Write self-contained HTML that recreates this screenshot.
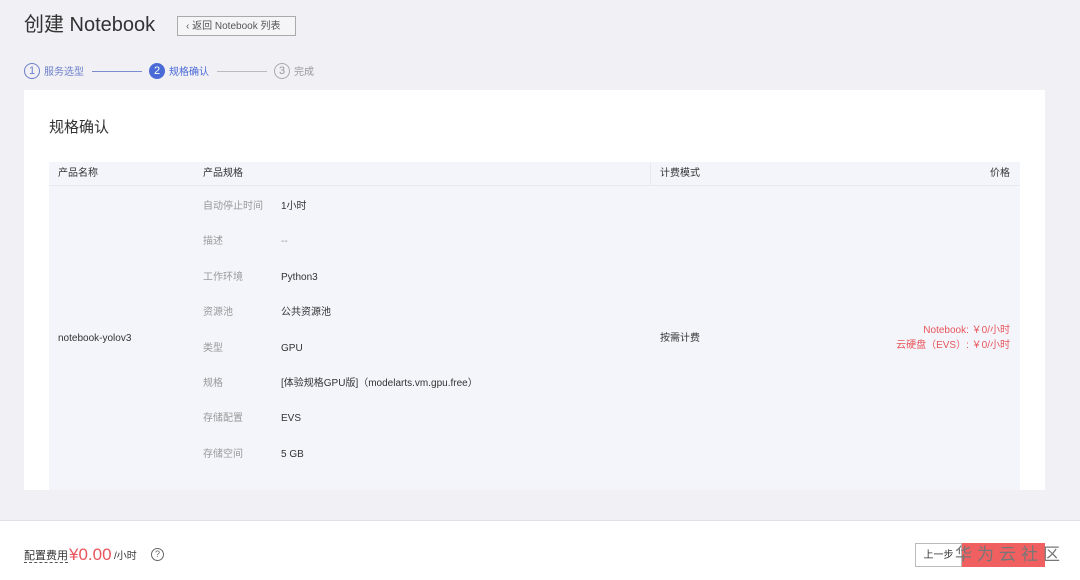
<!DOCTYPE html>
<html><head><meta charset="utf-8"><style>
*{margin:0;padding:0;box-sizing:border-box}
body{width:1080px;height:580px;overflow:hidden;background:#f0f0f5;font-family:"Liberation Sans","Noto Sans CJK SC",sans-serif;color:#333;position:relative;font-size:10px;line-height:12px}
.a{position:absolute;white-space:nowrap;line-height:12px}
.lbl{color:#999}
</style></head><body>
<div class="a" style="left:24px;top:12px;font-size:20px;line-height:26px;color:#333">创建 Notebook</div>
<div class="a" style="left:177px;top:16px;width:119px;height:20px;border:1px solid #aaa;background:#f5f5f7;font-size:10px;color:#555;line-height:19px;padding-left:8px">&lsaquo; 返回 Notebook 列表</div>
<div class="a" style="left:24px;top:63px;width:16px;height:16px;border:1px solid #6d7fc9;border-radius:50%;color:#6d7fc9;text-align:center;line-height:14px;font-size:11px">1</div>
<div class="a" style="left:44px;top:67px;color:#6d7fc9">服务选型</div>
<div class="a" style="left:92px;top:71px;width:50px;height:1px;background:#7b8dd0"></div>
<div class="a" style="left:149px;top:63px;width:16px;height:16px;background:#4a6ad6;border-radius:50%;color:#fff;text-align:center;line-height:16px;font-size:11px">2</div>
<div class="a" style="left:169px;top:67px;color:#4a6ad6">规格确认</div>
<div class="a" style="left:217px;top:71px;width:50px;height:1px;background:#bbb"></div>
<div class="a" style="left:274px;top:63px;width:16px;height:16px;border:1px solid #aaa;border-radius:50%;color:#999;text-align:center;line-height:14px;font-size:11px">3</div>
<div class="a" style="left:294px;top:67px;color:#999">完成</div>
<div class="a" style="left:24px;top:90px;width:1021px;height:400px;background:#fff"></div>
<div class="a" style="left:49px;top:118px;font-size:15px;line-height:20px;color:#333">规格确认</div>
<div class="a" style="left:49px;top:162px;width:971px;height:328px;background:#f3f5fb"></div>
<div class="a" style="left:49px;top:185px;width:971px;height:1px;background:#e6e9f2"></div>
<div class="a" style="left:58px;top:168px">产品名称</div>
<div class="a" style="left:203px;top:168px">产品规格</div>
<div class="a" style="left:650px;top:162px;width:1px;height:23px;background:#e6e9f2"></div>
<div class="a" style="left:660px;top:168px">计费模式</div>
<div class="a" style="left:990px;top:168px">价格</div>
<div class="a" style="left:58px;top:333px">notebook-yolov3</div>
<div class="a lbl" style="left:203px;top:201px">自动停止时间</div><div class="a" style="left:281px;top:201px">1小时</div>
<div class="a lbl" style="left:203px;top:236px">描述</div><div class="a lbl" style="left:281px;top:236px">--</div>
<div class="a lbl" style="left:203px;top:272px">工作环境</div><div class="a" style="left:281px;top:272px">Python3</div>
<div class="a lbl" style="left:203px;top:307px">资源池</div><div class="a" style="left:281px;top:307px">公共资源池</div>
<div class="a lbl" style="left:203px;top:343px">类型</div><div class="a" style="left:281px;top:343px">GPU</div>
<div class="a lbl" style="left:203px;top:378px">规格</div><div class="a" style="left:281px;top:378px">[体验规格GPU版]（modelarts.vm.gpu.free）</div>
<div class="a lbl" style="left:203px;top:413px">存储配置</div><div class="a" style="left:281px;top:413px">EVS</div>
<div class="a lbl" style="left:203px;top:449px">存储空间</div><div class="a" style="left:281px;top:449px">5 GB</div>
<div class="a" style="left:660px;top:333px">按需计费</div>
<div class="a" style="right:70px;top:325px;color:#e8555a;text-align:right">Notebook: ￥0/小时</div>
<div class="a" style="right:70px;top:340px;color:#e8555a;text-align:right">云硬盘（EVS）: ￥0/小时</div>
<div class="a" style="left:0;top:520px;width:1080px;height:60px;background:#fff;border-top:1px solid #e0e0e6"></div>
<div class="a" style="left:24px;top:550px;font-size:11px;color:#333;border-bottom:1px dashed #555">配置费用</div>
<div class="a" style="left:69px;top:545px;font-size:17px;line-height:20px;color:#e8555a">¥0.00</div>
<div class="a" style="left:114px;top:551px;font-size:10px">/小时</div>
<div class="a" style="left:151px;top:548px;width:13px;height:13px;border:1px solid #666;border-radius:50%;font-size:9px;text-align:center;line-height:11px;color:#666">?</div>
<div class="a" style="left:915px;top:543px;width:47px;height:24px;border:1px solid #bbb;background:#fff;font-size:10px;line-height:24px;text-align:center">上一步</div>
<div class="a" style="left:962px;top:543px;width:83px;height:24px;background:#f06060"></div>
<div class="a" style="left:955px;top:545px;font-size:17px;line-height:20px;color:#777;letter-spacing:5px">华为云社区</div>
</body></html>
